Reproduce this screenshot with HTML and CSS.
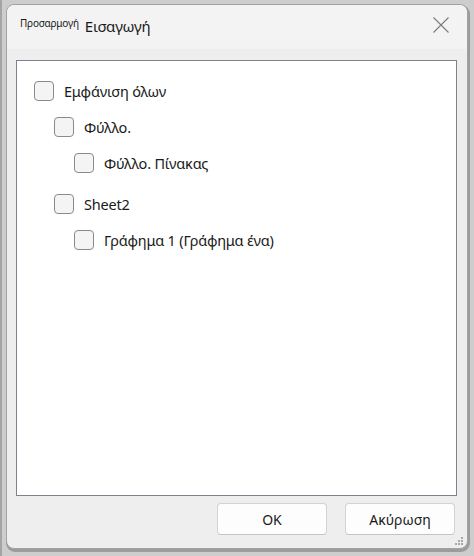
FILE: index.html
```html
<!DOCTYPE html>
<html lang="el">
<head>
<meta charset="utf-8">
<title>Εισαγωγή</title>
<link rel="stylesheet" href="styles.css">
</head>
<body>
<div class="window">
  <div class="titlebar">
    <span class="app">Προσαρμογή</span>
    <span class="title">Εισαγωγή</span>
    <span class="close">
      <svg width="16" height="16" viewBox="0 0 16 16"><path d="M0.5 0.5 L15.5 15.5 M15.5 0.5 L0.5 15.5" stroke="#7b7b7b" stroke-width="1.1" fill="none"/></svg>
    </span>
  </div>
  <div class="content">
    <div class="panel">
      <div class="row lvl0"><span class="box"></span><span class="label">Εμφάνιση όλων</span></div>
      <div class="row lvl1"><span class="box"></span><span class="label">Φύλλο.</span></div>
      <div class="row lvl2"><span class="box"></span><span class="label">Φύλλο. Πίνακας</span></div>
      <div class="row lvl1 group"><span class="box"></span><span class="label">Sheet2</span></div>
      <div class="row lvl2"><span class="box"></span><span class="label">Γράφημα 1 (Γράφημα ένα)</span></div>
    </div>
  </div>
  <div class="footer">
    <button class="btn">OK</button>
    <button class="btn">Ακύρωση</button>
    <span class="grip">
      <svg width="8" height="8" viewBox="0 0 8 8" fill="#a8a8a8"><rect x="6" y="0" width="2" height="2"/><rect x="3" y="3" width="2" height="2"/><rect x="6" y="3" width="2" height="2"/><rect x="0" y="6" width="2" height="2"/><rect x="3" y="6" width="2" height="2"/><rect x="6" y="6" width="2" height="2"/></svg>
    </span>
  </div>
</div>
</body>
</html>
```
FILE: styles.css
```css
html, body {
  margin: 0;
  padding: 0;
}
body {
  width: 474px;
  height: 556px;
  overflow: hidden;
  box-sizing: border-box;
  background: #cdcdcd;
  border-left: 2px solid #a4a4a4;
  padding: 4px 0 0 4px;
  font-family: "Noto Sans", "Open Sans", sans-serif;
  color: #1a1a1a;
}
.window {
  position: relative;
  width: 462px;
  height: 545px;
  box-sizing: border-box;
  border: 1px solid #a2a2a2;
  border-radius: 8px;
  background: #eeeeee;
  box-shadow: 1px 2px 0 1px #9c9c9c;
  display: flex;
  flex-direction: column;
}
.titlebar {
  height: 44px;
  flex: none;
  background: #f3f3f3;
  border-radius: 8px 8px 0 0;
  display: flex;
  align-items: center;
  padding-left: 13px;
  padding-bottom: 2px;
  box-sizing: border-box;
}
.app {
  font-size: 10px;
  letter-spacing: -0.2px;
  margin-right: 6px;
  margin-top: -6px;
}
.title {
  font-size: 15px;
  letter-spacing: -0.2px;
}
.close {
  margin-left: auto;
  margin-right: 18px;
  width: 16px;
  height: 16px;
  display: flex;
  margin-top: -3px;
}
.content {
  padding: 11px 10px 0 9px;
}
.panel {
  height: 436px;
  box-sizing: border-box;
  background: #ffffff;
  border: 1px solid #7e828c;
  padding: 20px 0 0 17px;
}
.row {
  display: flex;
  align-items: center;
  height: 20px;
  margin-bottom: 16px;
}
.row.group {
  margin-top: 21px;
}
.lvl1 { padding-left: 20px; }
.lvl2 { padding-left: 40px; }
.box {
  width: 20px;
  height: 20px;
  box-sizing: border-box;
  border: 1px solid #8a8a8a;
  border-radius: 4px;
  background: #f4f4f4;
  flex: none;
  margin-right: 10px;
}
.label {
  font-size: 14.5px;
  letter-spacing: -0.2px;
  line-height: 20px;
}
.footer {
  display: flex;
  justify-content: flex-end;
  gap: 18px;
  padding: 7px 12px 0 0;
  position: relative;
  flex: 1;
}
.btn {
  width: 110px;
  height: 32px;
  box-sizing: border-box;
  border: 1px solid #d3d3d3;
  border-bottom-color: #c4c4c4;
  border-radius: 4px;
  background: #fdfdfd;
  font-family: "Noto Sans", "Open Sans", sans-serif;
  font-size: 14px;
  color: #1a1a1a;
  padding: 0;
}
.grip {
  position: absolute;
  right: 4px;
  bottom: 3px;
  width: 8px;
  height: 8px;
  display: flex;
}
```
